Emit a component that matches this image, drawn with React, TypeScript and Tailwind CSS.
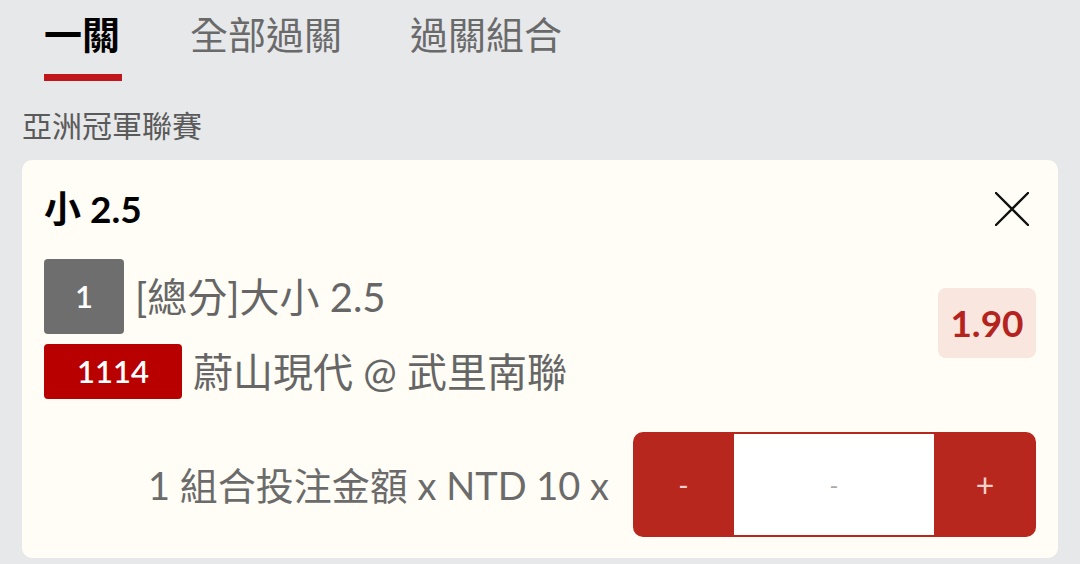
const tabs = [
  { name: '一關', active: true },
  { name: '全部過關', active: false },
  { name: '過關組合', active: false },
];

const font = { fontFamily: 'Lato, "Noto Sans CJK TC", sans-serif' };

function CloseIcon() {
  return (
    <svg width="34" height="34" viewBox="0 0 34 34" className="mr-[7px]">
      <path d="M1 1 L33 33 M33 1 L1 33" stroke="#111" strokeWidth="2.4" strokeLinecap="round" />
    </svg>
  );
}

export default function App() {
  return (
    <div className="w-[1080px] h-[564px] overflow-hidden bg-[#e7e8ea]" style={font}>
      <nav className="flex gap-[68px] px-[44px] pt-[8px]">
        {tabs.map((tab) => (
          <div key={tab.name} className="flex flex-col items-start">
            <span
              className={
                tab.active
                  ? 'text-[38px] leading-[52px] font-bold text-black'
                  : 'text-[38px] leading-[52px] text-[#6a6a6a]'
              }
            >
              {tab.name}
            </span>
            <div className={tab.active ? 'mt-[14px] h-[7px] w-[78px] bg-[#c1161c]' : 'mt-[14px] h-[7px]'} />
          </div>
        ))}
      </nav>

      <p className="px-[22px] mt-[25px] text-[30px] leading-[38px] text-[#5a5a5a]">亞洲冠軍聯賽</p>

      <div className="mx-[22px] mt-[16px] rounded-[10px] bg-[#fffdf5] px-[22px] pt-[22px] pb-[21px]">
        <div className="flex items-center justify-between pt-[5px]">
          <span className="text-[37px] leading-[44px] font-bold text-black">小 2.5</span>
          <CloseIcon />
        </div>

        <div className="mt-[28px] flex items-center justify-between">
          <div className="flex flex-col gap-[10px]">
            <div className="flex items-center gap-[11px]">
              <span className="flex h-[75px] w-[80px] items-center justify-center rounded-[4px] bg-[#6e6e6e] text-[31px] font-semibold text-white">
                1
              </span>
              <span className="text-[40px] leading-[46px] text-[#666666]">[總分]大小 2.5</span>
            </div>
            <div className="flex items-center gap-[11px]">
              <span className="flex h-[55px] w-[138px] items-center justify-center rounded-[4px] bg-[#b90000] text-[31px] font-semibold text-white">
                1114
              </span>
              <span className="text-[40px] leading-[46px] text-[#666666]">蔚山現代 @ 武里南聯</span>
            </div>
          </div>
          <span className="mb-[12px] flex h-[70px] w-[98px] items-center justify-center rounded-[8px] bg-[#f8e6df] text-[37px] font-bold text-[#b5231f]">
            1.90
          </span>
        </div>

        <div className="mt-[33px] flex items-center justify-end gap-[24px]">
          <span className="text-[38px] leading-[46px] text-[#6b6b6b]">1 組合投注金額 x NTD 10 x</span>
          <div className="flex h-[105px] w-[403px] items-stretch rounded-[10px] bg-[#b8271e] py-[2px]">
            <button className="flex w-[101px] items-center justify-center text-[28px] text-[#f3d0cc]">-</button>
            <div className="flex flex-1 items-center justify-center bg-white text-[24px] text-[#aaaaaa]">-</div>
            <button className="flex w-[102px] items-center justify-center text-[32px] text-[#f3d0cc]">+</button>
          </div>
        </div>
      </div>
    </div>
  );
}
